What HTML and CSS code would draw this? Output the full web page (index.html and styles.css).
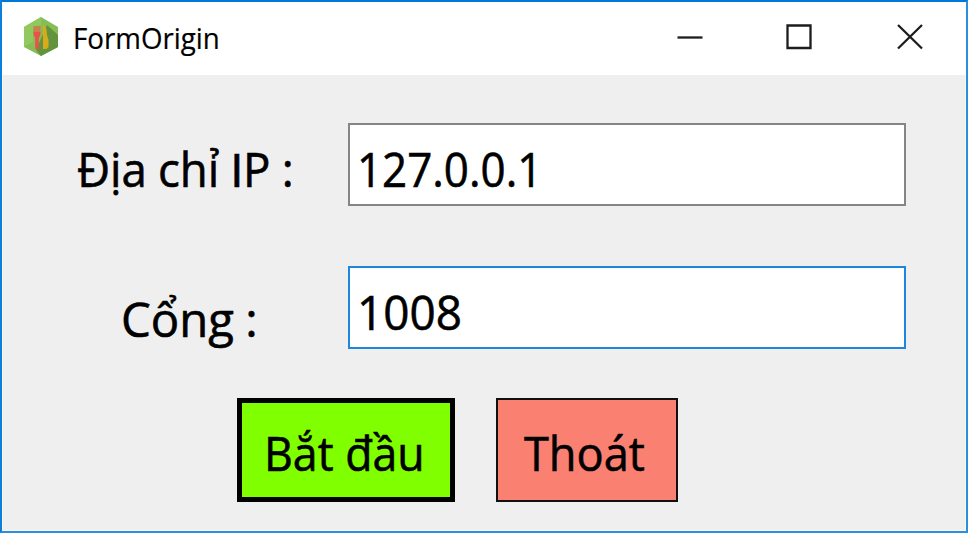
FILE: index.html
```html
<!DOCTYPE html>
<html lang="vi">
<head>
<meta charset="utf-8">
<title>FormOrigin</title>
<link rel="stylesheet" href="styles.css">
</head>
<body>
<div class="window">
  <header class="titlebar">
    <svg class="logo" viewBox="0 0 36 40">
      <path fill="#86bd55" d="M18 0 35 10V30L18 39 1 30V10Z"/>
      <path fill="#92c95e" d="M18 0 1 10V30L10 25V10L18 8Z"/>
      <path fill="#64933f" d="M24 8 35 18V30L18 39 13 33Z"/>
      <path fill="#c8804e" d="M10.500 9h7v7q0 4-2 5h-3q-2-1-2-5Z"/>
      <path fill="#e9524a" d="M10.500 15h7q0 4-1.700 5.500V32h-3.600V20.500Q10.500 19 10.500 15Z"/>
      <path fill="#d7ac18" d="M20 8q4 2 4 10l1.500 5V30l-2 2H20Z"/>
    </svg>
    <span class="title">FormOrigin</span>
    <svg class="controls" viewBox="0 0 250 30" fill="none" stroke="#1c1c1c" stroke-width="2.300">
      <path d="M3.500 17.500H28.500"/>
      <path d="M113.500 5.500H136.500V28H113.500Z"/>
      <path d="M224 5 248 28.500M248 5 224 28.500"/>
    </svg>
  </header>
  <main class="form">
    <div class="row">
      <div class="label label-ip"><span class="text t-ip">Địa chỉ <span class="plain">I</span>P :</span></div>
      <div class="field"><span class="text t-address">127.0.0.1</span></div>
    </div>
    <div class="row">
      <div class="label label-port"><span class="text t-port">Cổng :</span></div>
      <div class="field focused"><span class="text t-number">1008</span></div>
    </div>
    <div class="actions">
      <button class="start"><span class="text t-start">Bắt đầu</span></button>
      <button class="exit"><span class="text t-exit">Thoát</span></button>
    </div>
  </main>
</div>
</body>
</html>
```
FILE: styles.css
```css
* { box-sizing: border-box; }
body { margin: 0; background: #fff; font-family: "Open Sans", "Noto Sans", sans-serif; color: #000; overflow: hidden; }
.window { width: 968px; height: 533px; border: 2px solid #2b8fe0; border-top-color: #0078d7; border-left-color: #0c7fdb; display: flex; flex-direction: column; background: #fff; }
.titlebar { height: 73px; display: flex; align-items: flex-start; flex: none; }
.logo { width: 36px; height: 40px; margin: 15px 0 0 21px; }
.title { font-size: 29px; line-height: 40px; margin: 16px 0 0 14px; white-space: nowrap; transform-origin: left; transform: scaleX(.955); -webkit-text-stroke: .2px #000; }
.controls { width: 250px; height: 30px; margin: 18px 42px 0 auto; }
.form { flex: 1; background: #efefef; padding-top: 48px; border: 1px solid #faf6ee; border-top: 0; }
.row { display: flex; height: 84px; margin-bottom: 59px; padding-right: 59px; }
.label { width: 345px; flex: none; }
.label-ip { padding: 13px 0 0 74px; }
.label-port { padding: 20px 0 0 118px; }
.text { display: inline-block; white-space: nowrap; font-size: 48px; line-height: 66px; transform-origin: left; -webkit-text-stroke: .6px #000; }
.plain { font-family: "Liberation Sans", sans-serif; line-height: 1; }
.field { width: 558px; height: 83px; border: 2px solid #858585; background: #fff; padding: 11px 0 0 7px; }
.field.focused { border-color: #1c87de; }
.t-ip { transform: scaleX(.95); word-spacing: -.8px; }
.t-address { transform: scaleX(.915); }
.t-port { transform: scaleX(.985); word-spacing: -1px; }
.t-number { transform: scaleX(.955); }
.actions { display: flex; gap: 41px; margin-top: -11px; padding-left: 234px; }
button { font: inherit; color: #000; height: 104px; text-align: left; border: 2px solid #101010; padding: 0; }
.start { width: 218px; background: #80ff00; border: 5px solid #000; padding: 6px 0 0 22px; }
.exit { width: 182px; background: #fa8072; padding: 6px 0 0 26px; }
.t-start { transform: scaleX(.93); }
.t-exit { transform: scaleX(.94); }
```
